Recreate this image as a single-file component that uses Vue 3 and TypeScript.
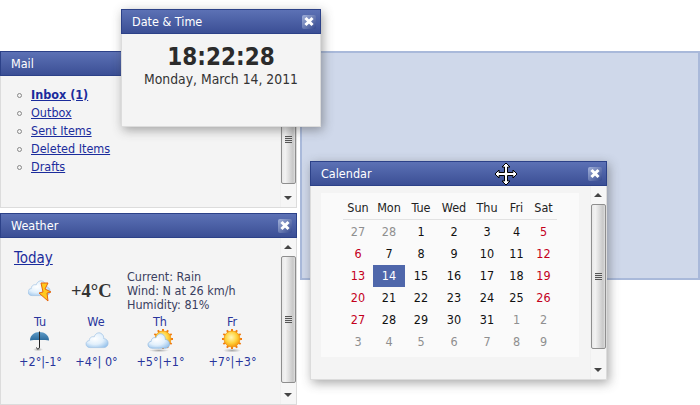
<template>
  <div class="desktop">
    <svg class="defs" width="0" height="0">
      <defs>
        <radialGradient id="cloudFill" cx="40%" cy="40%" r="70%">
          <stop offset="0%" stop-color="#ffffff" />
          <stop offset="55%" stop-color="#e2f0fc" />
          <stop offset="100%" stop-color="#9ac4ec" />
        </radialGradient>
        <radialGradient id="sunFill" cx="45%" cy="40%" r="60%">
          <stop offset="0%" stop-color="#fff7b8" />
          <stop offset="60%" stop-color="#ffd23c" />
          <stop offset="100%" stop-color="#f59a10" />
        </radialGradient>
        <linearGradient id="umbrellaFill" x1="0" y1="0" x2="0" y2="1">
          <stop offset="0%" stop-color="#5f9cc8" />
          <stop offset="100%" stop-color="#2a6a9c" />
        </linearGradient>
        <radialGradient id="groundShade" cx="50%" cy="50%" r="50%">
          <stop offset="0%" stop-color="#888" stop-opacity="0.7" />
          <stop offset="100%" stop-color="#888" stop-opacity="0" />
        </radialGradient>
        <path id="cloudShape" d="M5 19C2 19 0 17 0 14.500 0 12 2 10.500 4 10.500 4 7 7 5 10 6 11 2 15 0 18 1.500 21 3 22 6 21.500 8 24.500 8 27 10.500 27 13.500 27 17 24.500 19 22 19z" />
        <g id="sunShape">
          <g stroke="#f07a10" stroke-width="2">
            <line v-for="a in sunRays" :key="a" x1="10" y1="0" x2="10" y2="20" :transform="`rotate(${a} 10 10)`" />
          </g>
          <circle cx="10" cy="10" r="8" fill="url(#sunFill)" stroke="#f39a14" stroke-width="0.8" />
        </g>
      </defs>
    </svg>

    <div class="backdrop"></div>

    <!-- Mail -->
    <section class="win win-mail">
      <header class="win-head"><span>Mail</span></header>
      <div class="win-body">
        <ul class="mail-list">
          <li v-for="m in mailItems" :key="m.label">
            <a href="#" :class="{ unread: m.unread }">{{ m.label }}</a>
          </li>
        </ul>
        <div class="scroll">
          <span class="arr up"></span>
          <div class="thumb thumb-mail"><i></i></div>
          <span class="arr down"></span>
        </div>
      </div>
    </section>

    <!-- Weather -->
    <section class="win win-weather">
      <header class="win-head">
        <span>Weather</span>
        <button class="close"></button>
      </header>
      <div class="win-body">
        <div class="weather">
          <a href="#" class="today">Today</a>
          <div class="now">
            <svg class="now-icon" width="24" height="24" viewBox="0 0 24 24">
              <use href="#cloudShape" fill="url(#cloudFill)" stroke="#9cc0e4" stroke-width="0.8" transform="translate(0 1) scale(0.82)" />
              <path d="M13 4h7l-3 6 6 3-4 1 1 8-9-8 4-1z" fill="#ffc91e" stroke="#e8650c" stroke-width="1" stroke-linejoin="round" />
            </svg>
            <div class="now-temp">+4°C</div>
            <div class="now-text">
              <div>Current: Rain</div>
              <div>Wind: N at 26 km/h</div>
              <div>Humidity: 81%</div>
            </div>
          </div>
          <div class="forecast">
            <div v-for="d in forecast" :key="d.day" class="fc-day">
              <div class="fc-name">{{ d.day }}</div>
              <svg class="fc-icon" width="28" height="24" viewBox="0 0 28 24">
                <template v-if="d.kind === 'rain'">
                  <ellipse cx="12" cy="19.500" rx="5" ry="1.800" fill="url(#groundShade)" />
                  <path d="M4 10.500C4 5 8.500 2 13.500 2s9.500 3 9.500 8.500c-3-.6-16-.6-19 0z" fill="url(#umbrellaFill)" />
                  <path d="M13.500 1.500V17c0 2.500-3 2.500-3 .5" fill="none" stroke="#222" stroke-width="1" />
                </template>
                <template v-else-if="d.kind === 'cloud'">
                  <use href="#cloudShape" fill="url(#cloudFill)" stroke="#9cc0e4" stroke-width="0.8" transform="translate(4 2) scale(0.82)" />
                </template>
                <template v-else-if="d.kind === 'partly'">
                  <ellipse cx="13" cy="20.500" rx="10" ry="1.600" fill="url(#groundShade)" />
                  <use href="#sunShape" transform="translate(7 -1)" />
                  <use href="#cloudShape" fill="url(#cloudFill)" stroke="#86b2de" stroke-width="0.8" transform="translate(2 3) scale(0.8)" />
                </template>
                <template v-else>
                  <ellipse cx="14" cy="20.500" rx="9" ry="2" fill="url(#groundShade)" />
                  <use href="#sunShape" transform="translate(4 -1)" />
                </template>
              </svg>
              <div class="fc-temp">{{ d.temp }}</div>
            </div>
          </div>
        </div>
        <div class="scroll">
          <span class="arr up"></span>
          <div class="thumb thumb-weather"><i></i></div>
          <span class="arr down"></span>
        </div>
      </div>
    </section>

    <!-- Calendar -->
    <section class="win win-calendar float">
      <header class="win-head">
        <span>Calendar</span>
        <button class="close"></button>
      </header>
      <div class="win-body">
        <div class="cal-wrap">
          <div class="cal-panel">
            <div class="cal-grid cal-names">
              <div v-for="n in dayNames" :key="n">{{ n }}</div>
            </div>
            <div v-for="(week, w) in weeks" :key="w" class="cal-grid cal-row">
              <div
                v-for="(c, i) in week"
                :key="i"
                class="cal-cell"
                :class="{ off: c.off, weekend: !c.off && (i === 0 || i === 6), selected: c.day === 14 && !c.off }"
              >{{ c.day }}</div>
            </div>
          </div>
        </div>
        <div class="scroll">
          <span class="arr up"></span>
          <div class="thumb thumb-calendar"><i></i></div>
          <span class="arr down"></span>
        </div>
      </div>
      <svg class="move-cursor" width="24" height="24" viewBox="0 0 24 24">
        <path d="M12 1l4 4h-2.500v5.500H19V8l4 4-4 4v-2.500h-5.500V19H16l-4 4-4-4h2.500v-5.500H5V16l-4-4 4-4v2.500h5.500V5H8z" fill="#fff" stroke="#000" stroke-width="1" stroke-linejoin="miter" />
      </svg>
    </section>

    <!-- Date & Time -->
    <section class="win win-date float">
      <header class="win-head">
        <span>Date &amp; Time</span>
        <button class="close"></button>
      </header>
      <div class="date-body">
        <div class="clock">{{ time }}</div>
        <div class="long-date">{{ longDate }}</div>
      </div>
    </section>
  </div>
</template>

<script setup lang="ts">
interface CalCell {
  day: number
  off: boolean
}

const time = '18:22:28'
const longDate = 'Monday, March 14, 2011'

const mailItems = [
  { label: 'Inbox (1)', unread: true },
  { label: 'Outbox', unread: false },
  { label: 'Sent Items', unread: false },
  { label: 'Deleted Items', unread: false },
  { label: 'Drafts', unread: false }
]

const forecast = [
  { day: 'Tu', kind: 'rain', temp: '+2°|-1°' },
  { day: 'We', kind: 'cloud', temp: '+4°| 0°' },
  { day: 'Th', kind: 'partly', temp: '+5°|+1°' },
  { day: 'Fr', kind: 'sun', temp: '+7°|+3°' }
]

const sunRays = [0, 30, 60, 90, 120, 150]

const dayNames = ['Sun', 'Mon', 'Tue', 'Wed', 'Thu', 'Fri', 'Sat']

// March 2011 starts on a Tuesday, two days of February before it
const cells: CalCell[] = [
  ...[27, 28].map((day) => ({ day, off: true })),
  ...Array.from({ length: 31 }, (_, i) => ({ day: i + 1, off: false })),
  ...Array.from({ length: 9 }, (_, i) => ({ day: i + 1, off: true }))
]
const weeks: CalCell[][] = Array.from({ length: 6 }, (_, w) => cells.slice(w * 7, w * 7 + 7))
</script>

<style>
html,
body {
  margin: 0;
  background: #fff;
  overflow: hidden;
}
</style>

<style scoped>
.desktop {
  position: relative;
  width: 700px;
  height: 405px;
  overflow: hidden;
  background: #fff;
  font-family: "DejaVu Sans", "Liberation Sans", sans-serif;
  font-stretch: condensed;
  font-size: 12.500px;
  color: #333;
}

.defs {
  position: absolute;
}

.backdrop {
  position: absolute;
  left: 300px;
  top: 51px;
  width: 396px;
  height: 225px;
  background: #cfd8ea;
  border: 2px solid #a9b9da;
}

.win {
  position: absolute;
  display: flex;
  flex-direction: column;
  box-sizing: border-box;
  background: #f4f4f4;
}

.float {
  box-shadow: 2px 3px 10px rgba(60, 60, 60, 0.45);
}

.win-mail {
  left: 0;
  top: 51px;
  width: 297px;
  height: 157px;
}

.win-weather {
  left: 0;
  top: 213px;
  width: 297px;
  height: 192px;
}

.win-calendar {
  left: 310px;
  top: 161px;
  width: 297px;
  height: 219px;
}

.win-date {
  left: 121px;
  top: 9px;
  width: 200px;
  height: 118px;
}

.win-head {
  flex: none;
  box-sizing: border-box;
  height: 25px;
  display: flex;
  align-items: center;
  justify-content: space-between;
  padding: 0 4px 0 10px;
  border: 1px solid #2c4188;
  background: linear-gradient(#5c71b5, #3b4f95);
  color: #fff;
}

.close {
  position: relative;
  width: 14px;
  height: 14px;
  padding: 0;
  border: 0;
  border-radius: 2px;
  background: linear-gradient(135deg, #a3b2da, #34488e);
}

.close::before,
.close::after {
  content: "";
  position: absolute;
  left: 2px;
  top: 5.500px;
  width: 10px;
  height: 3px;
  background: #fff;
  transform: rotate(45deg);
}

.close::after {
  transform: rotate(-45deg);
}

.win-body {
  flex: 1;
  display: flex;
  min-height: 0;
  border: 1px solid #dcdcdc;
  border-top: 0;
}

.date-body {
  flex: 1;
  display: flex;
  flex-direction: column;
  align-items: center;
  padding-top: 9px;
  border: 1px solid #dcdcdc;
  border-top: 0;
}

.clock {
  font-size: 24px;
  font-weight: 700;
  line-height: 28px;
  color: #2b2b2b;
}

.long-date {
  font-size: 13.800px;
  line-height: 17px;
  color: #333;
}

.scroll {
  flex: none;
  width: 16px;
  display: flex;
  flex-direction: column;
  align-items: center;
  box-sizing: border-box;
  padding-right: 1px;
  background: #f6f6f6;
  border-left: 1px solid #f0f0f0;
}

.arr {
  flex: none;
  width: 0;
  height: 0;
  margin: 7px 0;
  border-left: 4px solid transparent;
  border-right: 4px solid transparent;
}

.arr.up {
  border-bottom: 4px solid #444;
}

.arr.down {
  margin-top: auto;
  border-top: 4px solid #444;
}

.thumb {
  flex: none;
  box-sizing: border-box;
  width: 15px;
  display: flex;
  align-items: center;
  justify-content: center;
  border: 1px solid #8e8e8e;
  border-radius: 2px;
  background: linear-gradient(90deg, #e8e8e8, #f2f2f2 25%, #c8c8c8 85%, #e0e0e0);
}

.thumb i {
  display: block;
  width: 7px;
  height: 7px;
  background: repeating-linear-gradient(#555 0 1px, #ddd 1px 2px);
}

.thumb-mail {
  height: 90px;
}

.thumb-weather {
  height: 127px;
}

.thumb-calendar {
  height: 145px;
}

.mail-list {
  flex: 1;
  margin: 0;
  padding: 10px 0 0 30px;
  list-style: none;
  line-height: 18px;
}

.mail-list li {
  position: relative;
}

.mail-list li::before {
  content: "";
  position: absolute;
  left: -14px;
  top: 7px;
  width: 3px;
  height: 3px;
  border: 1px solid #888;
  border-radius: 50%;
}

a {
  color: #1b2c9c;
  text-decoration: underline;
}

.unread {
  font-weight: 700;
}

.weather {
  flex: 1;
  padding: 10px 0 0 13px;
}

.today {
  font-size: 15px;
  line-height: 20px;
}

.now {
  display: flex;
  align-items: center;
  margin-top: 2px;
  height: 42px;
}

.now-icon {
  flex: none;
  margin-left: 14px;
}

.now-temp {
  flex: none;
  width: 56px;
  margin-left: 19px;
  font-family: "Liberation Serif", serif;
  font-stretch: normal;
  font-size: 18.500px;
  font-weight: 700;
  color: #333;
}

.now-text {
  line-height: 14px;
  color: #3a4060;
}

.forecast {
  display: grid;
  grid-template-columns: 52px 60px 68px 76px;
  margin-top: 2px;
}

.fc-day {
  display: flex;
  flex-direction: column;
  align-items: center;
  color: #28359c;
}

.fc-name {
  line-height: 16px;
}

.fc-icon {
  display: block;
  overflow: visible;
}

.fc-temp {
  line-height: 15px;
  white-space: nowrap;
  padding-left: 1px;
}

.cal-wrap {
  flex: 1;
  padding: 7px 11px 0 10px;
}

.cal-panel {
  box-sizing: border-box;
  height: 164px;
  padding: 6px 22px 0;
  background: #fafafa;
}

.cal-grid {
  display: grid;
  grid-template-columns: 30px 32px 32px 34px 32px 27px 27px;
  text-align: center;
}

.cal-names {
  height: 20px;
  line-height: 17px;
  color: #222;
  border-bottom: 1px solid #e2e2e2;
}

.cal-row {
  height: 22px;
  line-height: 22px;
  color: #111;
}

.cal-names + .cal-row {
  margin-top: 1px;
}

.cal-cell.off {
  color: #8f8f8f;
}

.cal-cell.weekend {
  color: #c4001c;
}

.cal-cell.selected {
  background: #4f67ab;
  color: #fff;
}

.move-cursor {
  position: absolute;
  left: 184px;
  top: 1px;
}
</style>
